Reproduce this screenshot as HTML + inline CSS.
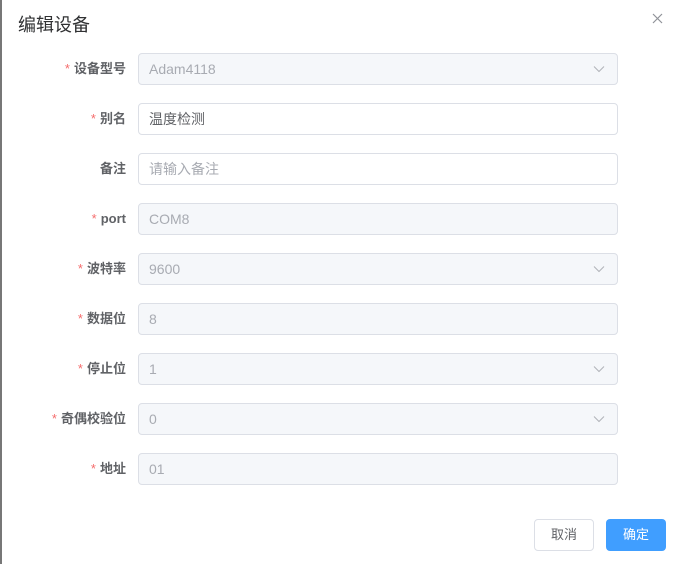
<!DOCTYPE html><html><head><style>
body{margin:0;width:682px;height:564px;background:#fff;font-family:"Liberation Sans","Noto Sans CJK SC",sans-serif;position:relative;overflow:hidden}
.lb{position:absolute;left:0;width:126px;text-align:right;font-size:13px;font-weight:bold;color:#606266;line-height:32px}
.lb i{color:#f56c6c;font-style:normal;margin-right:4px;font-weight:normal}
.in{position:absolute;left:138px;height:30px;border:1px solid #dcdfe6;border-radius:4px;background:#f5f7fa;color:#a8abb2;font-size:14px;line-height:30px;padding-left:10px;width:468px}
.w{background:#fff;color:#606266}
.ph{background:#fff;color:#a8abb2}
.ar{position:absolute;right:12px;top:11px}
.btn{position:absolute;top:519px;width:58px;height:30px;border-radius:4px;font-size:13px;line-height:30px;text-align:center}
</style></head><body>
<div style="position:absolute;left:0;top:0;width:2px;height:564px;background:#777"></div>
<div style="position:absolute;left:18px;top:11px;font-size:18px;color:#303133">编辑设备</div>
<svg style="position:absolute;left:652px;top:13px" width="11" height="11"><path d="M1 1L10 10M10 1L1 10" stroke="#909399" stroke-width="1.2"/></svg>

<div class="lb" style="top:53px"><i>*</i>设备型号</div><div class="in" style="top:53px">Adam4118<svg class="ar" width="12" height="8"><path d="M1 1.5L6 6.5L11 1.5" stroke="#b0b3b8" fill="none"/></svg></div>
<div class="lb" style="top:103px"><i>*</i>别名</div><div class="in w" style="top:103px">温度检测</div>
<div class="lb" style="top:153px">备注</div><div class="in ph" style="top:153px">请输入备注</div>
<div class="lb" style="top:203px"><i>*</i>port</div><div class="in" style="top:203px">COM8</div>
<div class="lb" style="top:253px"><i>*</i>波特率</div><div class="in" style="top:253px">9600<svg class="ar" width="12" height="8"><path d="M1 1.5L6 6.5L11 1.5" stroke="#b0b3b8" fill="none"/></svg></div>
<div class="lb" style="top:303px"><i>*</i>数据位</div><div class="in" style="top:303px">8</div>
<div class="lb" style="top:353px"><i>*</i>停止位</div><div class="in" style="top:353px">1<svg class="ar" width="12" height="8"><path d="M1 1.5L6 6.5L11 1.5" stroke="#b0b3b8" fill="none"/></svg></div>
<div class="lb" style="top:403px"><i>*</i>奇偶校验位</div><div class="in" style="top:403px">0<svg class="ar" width="12" height="8"><path d="M1 1.5L6 6.5L11 1.5" stroke="#b0b3b8" fill="none"/></svg></div>
<div class="lb" style="top:453px"><i>*</i>地址</div><div class="in" style="top:453px">01</div>

<div class="btn" style="left:534px;border:1px solid #dcdfe6;color:#606266">取消</div>
<div class="btn" style="left:606px;width:60px;height:32px;line-height:32px;background:#409eff;color:#fff">确定</div>
</body></html>
